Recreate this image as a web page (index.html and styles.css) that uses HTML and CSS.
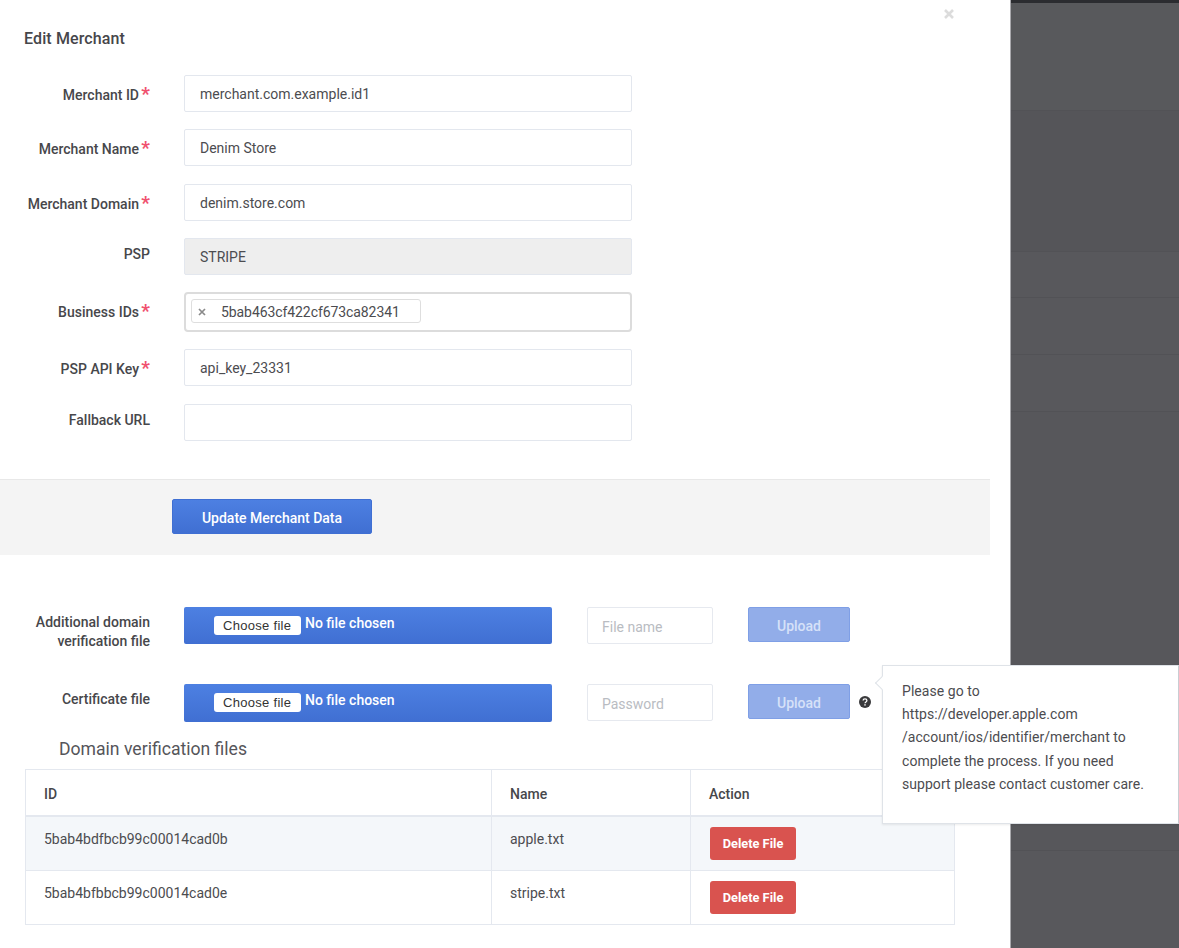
FILE: index.html
```html
<!DOCTYPE html>
<html lang="en">
<head>
<meta charset="utf-8">
<title>Edit Merchant</title>
<link rel="stylesheet" href="styles.css">
</head>
<body>
<div class="page">
  <main class="modal">
    <header class="modal-head">
      <h1 class="title">Edit Merchant</h1>
      <svg class="close" viewBox="0 0 12 12" width="12" height="12" aria-label="Close"><path d="M2 2l8 8M10 2l-8 8" stroke="#dcdcdc" stroke-width="2.6" fill="none"/></svg>
    </header>
    <form class="form">
      <div class="row">
        <div class="label req">Merchant ID<span class="star">*</span></div>
        <div class="field">merchant.com.example.id1</div>
      </div>
      <div class="row">
        <div class="label req">Merchant Name<span class="star">*</span></div>
        <div class="field">Denim Store</div>
      </div>
      <div class="row">
        <div class="label req">Merchant Domain<span class="star">*</span></div>
        <div class="field">denim.store.com</div>
      </div>
      <div class="row">
        <div class="label">PSP</div>
        <div class="field disabled">STRIPE</div>
      </div>
      <div class="row">
        <div class="label req">Business IDs<span class="star">*</span></div>
        <div class="field tags">
          <span class="tag">
            <svg class="tag-x" viewBox="0 0 8 8" width="8" height="8"><path d="M1 1l6 6M7 1l-6 6" stroke="#8a8a8a" stroke-width="1.7" fill="none"/></svg>
            5bab463cf422cf673ca82341
          </span>
        </div>
      </div>
      <div class="row">
        <div class="label req">PSP API Key<span class="star">*</span></div>
        <div class="field">api_key_23331</div>
      </div>
      <div class="row">
        <div class="label">Fallback URL</div>
        <div class="field"></div>
      </div>
    </form>
    <div class="footer">
      <button class="btn-primary" type="button">Update Merchant Data</button>
    </div>
    <section class="files">
      <div class="file-row">
        <div class="file-label">Additional domain verification file</div>
        <div class="file-box"><span class="choose">Choose file</span><span class="chosen">No file chosen</span></div>
        <div class="small-field">File name</div>
        <button class="btn-upload" type="button">Upload</button>
      </div>
      <div class="file-row">
        <div class="file-label">Certificate file</div>
        <div class="file-box tall"><span class="choose">Choose file</span><span class="chosen">No file chosen</span></div>
        <div class="small-field">Password</div>
        <button class="btn-upload" type="button">Upload</button>
        <svg class="help" viewBox="0 0 12 12" width="12" height="12" aria-label="Help"><circle cx="6" cy="6" r="6" fill="#3a3a3c"/><path d="M4.1 4.6c0-1.1.9-1.7 1.9-1.7s1.9.6 1.9 1.6c0 1.4-1.9 1.4-1.9 2.7" stroke="#fff" stroke-width="1.3" fill="none"/><rect x="5.3" y="8.2" width="1.4" height="1.4" fill="#fff"/></svg>
      </div>
      <h2 class="subhead">Domain verification files</h2>
      <table class="table">
        <thead>
          <tr><th class="c1">ID</th><th class="c2">Name</th><th>Action</th></tr>
        </thead>
        <tbody>
          <tr class="striped"><td>5bab4bdfbcb99c00014cad0b</td><td>apple.txt</td><td><button class="btn-delete" type="button">Delete File</button></td></tr>
          <tr><td>5bab4bfbbcb99c00014cad0e</td><td>stripe.txt</td><td><button class="btn-delete" type="button">Delete File</button></td></tr>
        </tbody>
      </table>
    </section>
  </main>
  <aside class="backdrop">
    <div class="band b1"></div>
    <div class="band b2"></div>
    <div class="band b3"></div>
    <div class="band b4"></div>
    <div class="band b5"></div>
    <div class="band b6"></div>
    <div class="band b7"></div>
  </aside>
  <div class="tooltip">
    <span class="arrow"></span>
    <p class="tip-text">Please go to<br>https://developer.apple.com<br>/account/ios/identifier/merchant to<br>complete the process. If you need<br>support please contact customer care.</p>
  </div>
</div>
</body>
</html>
```
FILE: styles.css
```css
* { box-sizing: border-box; }
html, body { margin: 0; padding: 0; height: 100%; }
body { font-family: Roboto, "Liberation Sans", sans-serif; font-size: 14px; color: #4c4c50; background: #fff; overflow: hidden; }
.page { position: relative; display: flex; width: 1179px; height: 948px; overflow: hidden; }

.modal { width: 1011px; height: 948px; flex: none; background: #fff; border-right: 1px solid #a9a9ad; }
.modal-head { display: flex; justify-content: space-between; align-items: flex-start; height: 75px; padding: 29.5px 55px 0 24px; }
.title { margin: 0; font-size: 16px; line-height: 18px; font-weight: 500; letter-spacing: 0.12px; color: #46464a; }
.close { margin-top: -21.5px; }

.form { display: flex; flex-direction: column; gap: 17.3px; padding-bottom: 38.2px; }
.row { display: flex; align-items: flex-start; gap: 34px; }
.label { width: 150px; flex: none; text-align: right; font-weight: 500; line-height: 18px; padding-top: 7px; color: #47474b; }
.label.req { padding-top: 10px; }
.star { position: relative; top: 0; display: inline-block; width: 11px; height: 14px; line-height: 18px; font-size: 19px; font-weight: 700; color: #f0506e; text-align: right; }
.field { width: 448px; height: 37px; padding: 1px 15px 0; line-height: 35px; border: 1px solid #e3e7ee; border-radius: 2px; background: #fff; color: #4c4c50; }
.field.disabled { background: #eeeeee; }
.field.tags { height: 40px; padding: 5px; border: 2px solid #dcdcdc; border-radius: 4px; line-height: 24px; }
.tag { display: flex; align-items: center; width: 230px; height: 24px; padding: 1px 0 0 6px; border: 1px solid #dedede; border-radius: 3px; letter-spacing: -0.08px; }
.tag-x { margin-right: 15px; }

.footer { width: 990px; height: 76px; padding: 19px 0 0 172px; background: #f4f4f4; border-top: 1px solid #e8e8e8; }
.btn-primary { display: block; width: 200px; height: 35px; padding: 3px 0 0; border: 1px solid #3f6fd3; border-radius: 2px; background: linear-gradient(#4d80e2, #406fd2); color: #fff; font: 500 14px Roboto, sans-serif; }

.files { padding-top: 52px; }
.file-row { display: flex; align-items: flex-start; height: 77px; }
.file-row + .file-row { height: 55px; }
.file-label { width: 150px; margin-right: 34px; flex: none; text-align: right; font-weight: 500; line-height: 19px; padding: 6px 0 0 20px; color: #47474b; }
.file-box { display: flex; align-items: flex-start; gap: 4px; width: 368px; height: 37px; padding: 9px 0 0 30px; border-radius: 2px; background: linear-gradient(#4d80e2, #406fd2); }
.file-box.tall { height: 38px; }
.choose { width: 87px; height: 19px; flex: none; padding-left: 9px; background: #fff; border-radius: 3px; font: 13px/19px "Liberation Sans", sans-serif; letter-spacing: 0.3px; color: #333; }
.chosen { font-weight: 500; color: #fff; line-height: 14px; }
.small-field { width: 126px; height: 37px; margin-left: 35px; padding: 1px 14px 0; line-height: 36px; border: 1px solid #e6e9ef; border-radius: 2px; color: #b9bcc2; }
.btn-upload { width: 102px; height: 35px; margin-left: 35px; padding: 3px 0 0; border: 1px solid #7f9fe6; border-radius: 2px; background: #92ade9; color: #d6e1f8; font: 500 14px Roboto, sans-serif; }
.help { margin: 12px 0 0 9px; }
.subhead { margin: 0 0 10px 59px; font-size: 17.6px; line-height: 20px; font-weight: 400; color: #55555a; }

.table { width: 930px; margin-left: 25px; border-collapse: collapse; table-layout: fixed; }
.table th, .table td { border: 1px solid #e4e8ef; padding: 0 18px; text-align: left; vertical-align: top; }
.table th { height: 46px; padding-top: 4px; font-weight: 500; line-height: 41px; color: #47474b; border-bottom-width: 2px; }
.table td { height: 54.5px; padding-top: 13px; line-height: 18px; }
.table .c1 { width: 466px; }
.table .c2 { width: 199px; }
.striped { background: #f4f7fa; }
.table td:last-child { padding-top: 10px; padding-left: 19px; }
.btn-delete { display: block; width: 86px; height: 33px; padding: 0; border: 0; border-radius: 3px; background: #d9534f; color: #fff; font: 700 12.8px Roboto, sans-serif; }

.backdrop { flex: 1; background: #58585c; }
.band { border-bottom: 1px solid #525256; }
.b1 { height: 3px; background: #2b2c30; border: 0; }
.b2 { height: 107.5px; background: #58595c; }
.b3 { height: 141px; background: #555559; }
.b4 { height: 46px; background: #58585c; }
.b5 { height: 57px; background: #58585c; }
.b6 { height: 57px; background: #58585c; }
.b7 { height: 439px; background: #57575b; }

.tooltip { position: absolute; left: 882px; top: 665px; width: 297px; height: 159px; padding: 14px 19px; background: #fff; border: 1px solid #dfe3e8; border-right-color: #c9cdd3; box-shadow: 0 1px 2px rgba(0,0,0,.08); }
.arrow { position: absolute; left: -6px; top: 12px; width: 10px; height: 10px; background: #fff; border-left: 1px solid #dfe3e8; border-bottom: 1px solid #dfe3e8; transform: rotate(45deg); }
.tip-text { margin: 0; line-height: 23.2px; color: #4c4c50; letter-spacing: 0.05px; }
```
